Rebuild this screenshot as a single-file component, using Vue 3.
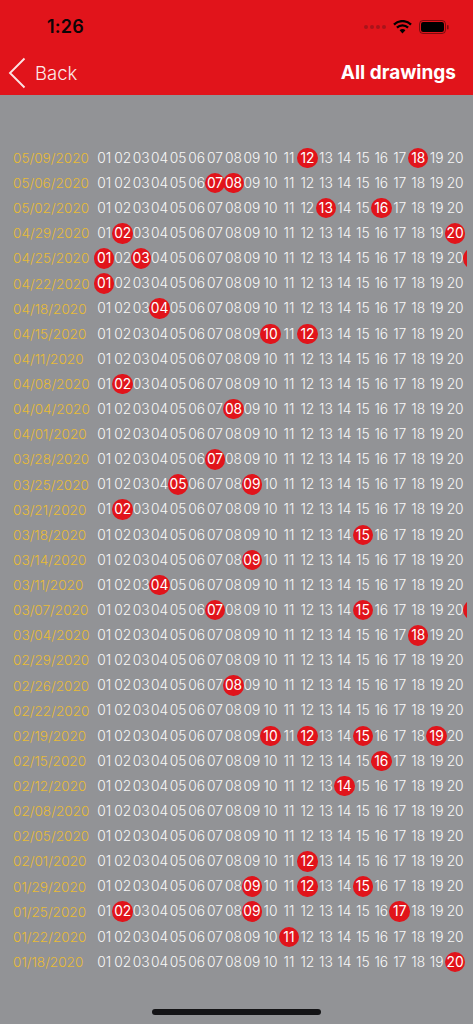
<script setup>
const rows = [
  ['05/09/2020', [12, 18]], ['05/06/2020', [7, 8]], ['05/02/2020', [13, 16]], ['04/29/2020', [2, 20]],
  ['04/25/2020', [1, 3, 21]], ['04/22/2020', [1]], ['04/18/2020', [4]], ['04/15/2020', [10, 12]],
  ['04/11/2020', []], ['04/08/2020', [2]], ['04/04/2020', [8]], ['04/01/2020', []],
  ['03/28/2020', [7]], ['03/25/2020', [5, 9]], ['03/21/2020', [2]], ['03/18/2020', [15]],
  ['03/14/2020', [9]], ['03/11/2020', [4]], ['03/07/2020', [7, 15, 21]], ['03/04/2020', [18]],
  ['02/29/2020', []], ['02/26/2020', [8]], ['02/22/2020', []], ['02/19/2020', [10, 12, 15, 19]],
  ['02/15/2020', [16]], ['02/12/2020', [14]], ['02/08/2020', []], ['02/05/2020', []],
  ['02/01/2020', [12]], ['01/29/2020', [9, 12, 15]], ['01/25/2020', [2, 9, 17]], ['01/22/2020', [11]],
  ['01/18/2020', [20]],
]
const pad = (n) => String(n).padStart(2, '0')
const numbers = Array.from({ length: 20 }, (_, i) => i + 1)
</script>

<template>
  <div class="page">
    <header class="head">
      <div class="status">
        <span class="time">1:26</span>
        <div class="status-icons">
          <span class="dots"><i></i><i></i><i></i><i></i></span>
          <svg class="wifi" width="19" height="14" viewBox="0 0 19 14">
            <path d="M1 4.6a12 12 0 0 1 17 0" fill="none" stroke="#000" stroke-width="2.3" />
            <path d="M3.9 7.6a8 8 0 0 1 11.2 0" fill="none" stroke="#000" stroke-width="2.3" />
            <path d="M6.6 10.3a4 4 0 0 1 5.8 0L9.5 13.4z" fill="#000" />
          </svg>
          <svg class="battery" width="30" height="14" viewBox="0 0 30 14">
            <rect x="0.5" y="0.5" width="26" height="13" rx="3.5" fill="none" stroke="#000" stroke-opacity=".45" />
            <rect x="2" y="2" width="23" height="10" rx="2.2" fill="#000" />
            <rect x="28" y="5" width="1.6" height="4.5" rx=".8" fill="#000" fill-opacity=".45" />
          </svg>
        </div>
      </div>
      <nav class="nav">
        <div class="back">
          <svg width="19" height="32" viewBox="0 0 19 32">
            <path d="M16.5 1.5 2 16l14.5 14.5" fill="none" stroke="#fbe3e3" stroke-width="1.9" />
          </svg>
          <span>Back</span>
        </div>
        <strong class="title">All drawings</strong>
      </nav>
    </header>

    <main class="list">
      <div v-for="[date, hits] in rows" :key="date" class="row">
        <span class="date">{{ date }}</span>
        <span v-for="n in numbers" :key="n" class="cell">
          <span class="num" :class="{ hit: hits.includes(n) }">{{ pad(n) }}</span>
        </span>
        <span v-if="hits.includes(21)" class="cell"><span class="num hit"></span></span>
      </div>
    </main>

    <div class="home"></div>
  </div>
</template>

<style>
html, body { margin: 0; background: #929396; }
</style>

<style scoped>
.page {
  width: 473px;
  height: 1024px;
  display: flex;
  flex-direction: column;
  overflow: hidden;
  background: #929396;
  font-family: Inter, Roboto, "Liberation Sans", sans-serif;
}
.head { background: #e1141b; height: 95px; flex: none; }
.status {
  height: 50px;
  display: flex;
  justify-content: space-between;
  align-items: center;
  padding: 3px 24px 0 47px;
  box-sizing: border-box;
}
.time { font-size: 18px; font-weight: 600; color: #0c0506; letter-spacing: .2px; }
.status-icons { display: flex; align-items: center; gap: 7px; }
.dots { display: flex; gap: 2px; }
.dots i { width: 4px; height: 4px; border-radius: 50%; background: #a8141a; }
.nav {
  height: 45px;
  display: flex;
  justify-content: space-between;
  align-items: center;
  padding: 0 17px 0 8px;
}
.back { display: flex; align-items: center; gap: 8px; color: #fbe9e9; font-size: 18.5px; font-weight: 300; }
.title { color: #fff; font-size: 19px; font-weight: 700; }
.list { padding-top: 50.4px; width: 467px; overflow: hidden; }
.row {
  height: 25.125px;
  display: flex;
  align-items: center;
  padding-left: 13px;
}
.date {
  flex: 0 0 82px;
  color: #e8bb35;
  font-size: 13.6px;
  font-weight: 300;
  white-space: nowrap;
}
.cell {
  flex: 0 0 18.47px;
  min-width: 0;
  display: flex;
  justify-content: center;
  color: #f8f8f8;
  font-size: 13.8px;
  font-weight: 300;
}
.num {
  flex: none;
  width: 20.5px;
  height: 20.5px;
  line-height: 20.5px;
  text-align: center;
  border-radius: 50%;
}
.num.hit { background: #e1141b; color: #fff; font-weight: 400; }
.home {
  width: 169px;
  height: 6px;
  border-radius: 3px;
  background: #141416;
  margin: auto auto 9px;
  flex: none;
}
</style>
